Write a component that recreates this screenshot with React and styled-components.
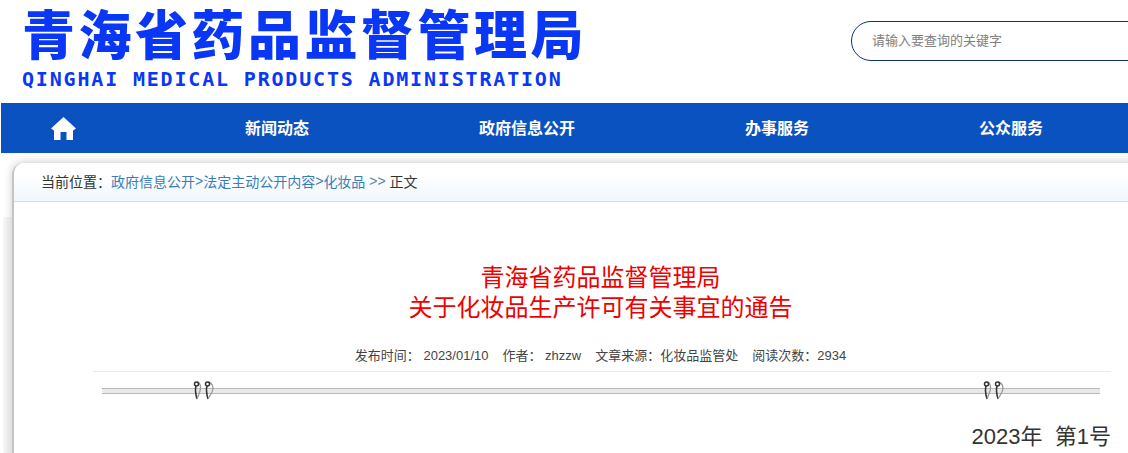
import React from "react";
import styled, { createGlobalStyle } from "styled-components";

const CJK = `"Liberation Sans", "Noto Sans CJK SC", sans-serif`;

const GlobalStyle = createGlobalStyle`
  html, body {
    margin: 0;
    padding: 0;
    background: #fff;
    overflow: hidden;
  }
  * {
    box-sizing: border-box;
  }
`;

const Page = styled.div`
  width: 1128px;
  height: 453px;
  overflow: hidden;
  font-family: ${CJK};
`;

const Header = styled.header`
  height: 103px;
  display: flex;
  justify-content: space-between;
  padding: 9px 0 0 22px;
`;

const Logo = styled.div`
  display: flex;
  flex-direction: column;
  color: #0a37f5;
`;

const LogoTitle = styled.div`
  font-size: 53px;
  line-height: 56px;
  font-weight: 900;
  letter-spacing: 3.5px;
  white-space: nowrap;
`;

const LogoSub = styled.div`
  margin-top: 2px;
  font-family: "DejaVu Sans Mono", monospace;
  font-size: 20px;
  line-height: 24px;
  font-weight: 700;
  letter-spacing: 1.82px;
  white-space: nowrap;
`;

const Search = styled.div`
  margin-top: 12px;
  width: 300px;
  margin-right: -23px;
  height: 40px;
  border: 1px solid #0f2f7c;
  border-radius: 20px 0 0 20px;
  padding: 0 0 3px 20px;
  display: flex;
  align-items: center;
  font-size: 13px;
  color: #808080;
`;

const Nav = styled.nav`
  height: 50px;
  margin-left: 1px;
  background: #0b52c1;
  display: grid;
  grid-template-columns: 151px 250px 250px 250px 218px;
  align-items: center;
`;

const HomeLink = styled.a`
  width: 124px;
  display: flex;
  justify-content: center;
`;

const NavItem = styled.a`
  padding-bottom: 2px;
  text-align: center;
  color: #fff;
  font-size: 16px;
  font-weight: 700;
`;

const Card = styled.section`
  position: relative;
  margin: 10px -40px 0 12px;
  height: 300px;
  background: #fff;
  border-left: 2px solid #c4c4c4;
  border-radius: 12px 0 0 0;
  box-shadow: 0 -1px 9px rgba(0, 0, 0, 0.2);

  &::before {
    content: "";
    position: absolute;
    top: 54px;
    left: -11px;
    width: 9px;
    height: 246px;
    background: linear-gradient(90deg, #f8f8f8, #dedede);
  }
`;

const Crumbs = styled.div`
  height: 39px;
  padding: 0 0 2px 27px;
  display: flex;
  align-items: center;
  font-size: 14px;
  color: #333;
  white-space: pre;
  border-bottom: 1px solid #d8dee6;
  border-radius: 10px 0 0 0;
  background: linear-gradient(#fff 30%, #eff7fd);
`;

const CrumbLink = styled.a`
  color: ${(p) => (p.$muted ? "#5d7f9e" : "#3a7cb8")};
`;

const Article = styled.article`
  width: 1018px;
  margin-left: 79px;
  padding-top: 61px;
  display: flex;
  flex-direction: column;
`;

const Title = styled.h1`
  margin: 0;
  padding-right: 3px;
  text-align: center;
  font-size: 24px;
  line-height: 30px;
  font-weight: 400;
  color: #f00000;
`;

const Meta = styled.div`
  margin-top: 24px;
  height: 25px;
  padding-right: 3px;
  border-bottom: 1px solid #e8e8e8;
  display: flex;
  justify-content: center;
  gap: 14px;
  font-size: 13px;
  line-height: 18px;
  color: #444;
  white-space: pre;
`;

const Divider = styled.div`
  position: relative;
  margin: 16px 11px 0 9px;
  height: 6px;
  background: #e9e9e9;
  border-top: 1px solid #b9b9b9;
  border-bottom: 1px solid #b9b9b9;
`;

const ClipSlot = styled.svg`
  position: absolute;
  top: -9px;
  left: ${(p) => p.$left}px;
`;

const Issue = styled.p`
  margin: 29px 0 0;
  text-align: right;
  font-size: 22px;
  line-height: 28px;
  color: #333;
  white-space: pre;
`;

const Clips = ({ left }) => (
  <ClipSlot $left={left} width="24" height="22" viewBox="0 0 24 22" fill="none">
    <path d="M4 6c-1 3-1 6 1 13" stroke="#333" strokeWidth="1.6" />
    <path d="M5 2c4 1 4 5 3 9l-3 8" stroke="#999" strokeWidth="1.3" />
    <circle cx="4.500" cy="4" r="2" stroke="#333" strokeWidth="1.500" />
    <path d="M15 6c-1 3-1 6 1 13" stroke="#333" strokeWidth="1.600" />
    <path d="M16 2c5 1 6 6 4 10l-4 7" stroke="#999" strokeWidth="1.300" />
    <circle cx="15.500" cy="4" r="2" stroke="#333" strokeWidth="1.500" />
  </ClipSlot>
);

const HomeIcon = () => (
  <svg width="25" height="23" viewBox="0 0 25 23" fill="#fff">
    <path d="M12.500 0 25 11.500 22 13.500V23h-6.500v-8h-6v8H3V13.500L0 11.500z" />
  </svg>
);

export default function App() {
  return (
    <Page>
      <GlobalStyle />
      <Header>
        <Logo>
          <LogoTitle>青海省药品监督管理局</LogoTitle>
          <LogoSub>QINGHAI MEDICAL PRODUCTS ADMINISTRATION</LogoSub>
        </Logo>
        <Search>请输入要查询的关键字</Search>
      </Header>
      <Nav>
        <HomeLink><HomeIcon /></HomeLink>
        <NavItem>新闻动态</NavItem>
        <NavItem>政府信息公开</NavItem>
        <NavItem>办事服务</NavItem>
        <NavItem>公众服务</NavItem>
      </Nav>
      <Card>
        <Crumbs>
          当前位置：<CrumbLink>政府信息公开</CrumbLink><CrumbLink>&gt;</CrumbLink><CrumbLink>法定主动公开内容</CrumbLink><CrumbLink>&gt;</CrumbLink><CrumbLink>化妆品</CrumbLink><CrumbLink $muted> &gt;&gt; </CrumbLink>正文
        </Crumbs>
        <Article>
          <Title>青海省药品监督管理局<br />关于化妆品生产许可有关事宜的通告</Title>
          <Meta>
            <span>发布时间： 2023/01/10</span>
            <span>作者： zhzzw</span>
            <span>文章来源：化妆品监管处</span>
            <span>阅读次数：2934</span>
          </Meta>
          <Divider>
            <Clips left={90} />
            <Clips left={880} />
          </Divider>
          <Issue>2023年  第1号</Issue>
        </Article>
      </Card>
    </Page>
  );
}
